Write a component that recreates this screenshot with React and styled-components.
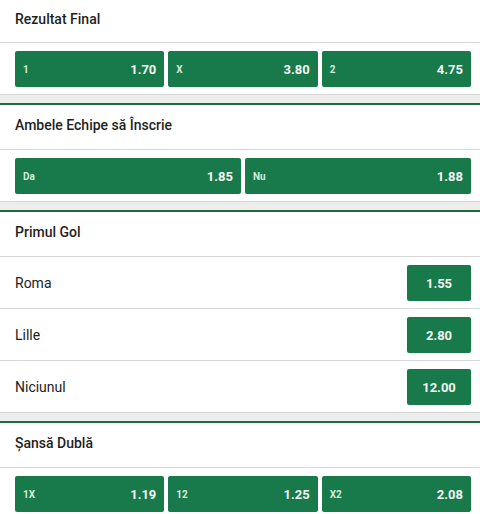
import React from 'react'
import styled, { createGlobalStyle } from 'styled-components'

const GlobalStyle = createGlobalStyle`
  html, body {
    margin: 0;
    padding: 0;
    background: #ffffff;
    overflow: hidden;
  }
  body {
    font-family: Roboto, "Noto Sans", "Liberation Sans", sans-serif;
    color: #222222;
  }
`

const markets = [
  {
    title: 'Rezultat Final',
    type: 'grid',
    outcomes: [
      { label: '1', odd: '1.70' },
      { label: 'X', odd: '3.80' },
      { label: '2', odd: '4.75' },
    ],
  },
  {
    title: 'Ambele Echipe să Înscrie',
    type: 'grid',
    outcomes: [
      { label: 'Da', odd: '1.85' },
      { label: 'Nu', odd: '1.88' },
    ],
  },
  {
    title: 'Primul Gol',
    type: 'list',
    outcomes: [
      { label: 'Roma', odd: '1.55' },
      { label: 'Lille', odd: '2.80' },
      { label: 'Niciunul', odd: '12.00' },
    ],
  },
  {
    title: 'Șansă Dublă',
    type: 'grid',
    outcomes: [
      { label: '1X', odd: '1.19' },
      { label: '12', odd: '1.25' },
      { label: 'X2', odd: '2.08' },
    ],
  },
]

const App = () => {
  return (
    <>
      <GlobalStyle />
      <Page>
        {markets.map((m, i) => (
          <Market key={m.title} $first={i === 0}>
            <Header $first={i === 0}>{m.title}</Header>
            {m.type === 'grid' ? (
              <OddsRow $cols={m.outcomes.length}>
                {m.outcomes.map((o) => (
                  <OddButton key={o.label}>
                    <Label>{o.label}</Label>
                    <Odd>{o.odd}</Odd>
                  </OddButton>
                ))}
              </OddsRow>
            ) : (
              m.outcomes.map((o) => (
                <ListRow key={o.label}>
                  <Name>{o.label}</Name>
                  <SmallButton>{o.odd}</SmallButton>
                </ListRow>
              ))
            )}
          </Market>
        ))}
      </Page>
    </>
  )
}

const Page = styled.div`
  display: flex;
  flex-direction: column;
  gap: 8px;
  background: #ededed;
  width: 480px;
`

const Market = styled.section`
  background: #ffffff;
  border-top: ${(p) => (p.$first ? 'none' : '2px solid #1d6b40')};
  border-bottom: 1px solid #d6d6d6;
`

const Header = styled.div`
  height: ${(p) => (p.$first ? '43px' : '45px')};
  box-sizing: border-box;
  display: flex;
  align-items: center;
  padding: 0 15px ${(p) => (p.$first ? '5px' : '4px')};
  font-size: 14px;
  font-weight: 500;
  color: #1f1f1f;
  border-bottom: 1px solid #d6d6d6;
`

const OddsRow = styled.div`
  display: grid;
  grid-template-columns: repeat(${(p) => p.$cols}, 1fr);
  gap: 4px;
  padding: 8px 9px 7px 15px;
`

const OddButton = styled.div`
  height: 36px;
  box-sizing: border-box;
  display: flex;
  align-items: center;
  justify-content: space-between;
  padding: 0 8px;
  background: #187a4a;
  border-radius: 2px;
`

const Label = styled.span`
  font-size: 10px;
  font-weight: 700;
  color: #d3ecd9;
`

const Odd = styled.span`
  font-size: 13px;
  font-weight: 700;
  color: #f4f4f4;
`

const ListRow = styled.div`
  display: flex;
  align-items: center;
  justify-content: space-between;
  padding: 8px 9px 7px 15px;
  & + & {
    border-top: 1px solid #d6d6d6;
  }
`

const Name = styled.span`
  font-size: 14px;
  color: #222222;
`

const SmallButton = styled.div`
  width: 64px;
  height: 36px;
  display: flex;
  align-items: center;
  justify-content: center;
  background: #187a4a;
  border-radius: 2px;
  font-size: 13px;
  font-weight: 700;
  color: #f4f4f4;
`

export default App
